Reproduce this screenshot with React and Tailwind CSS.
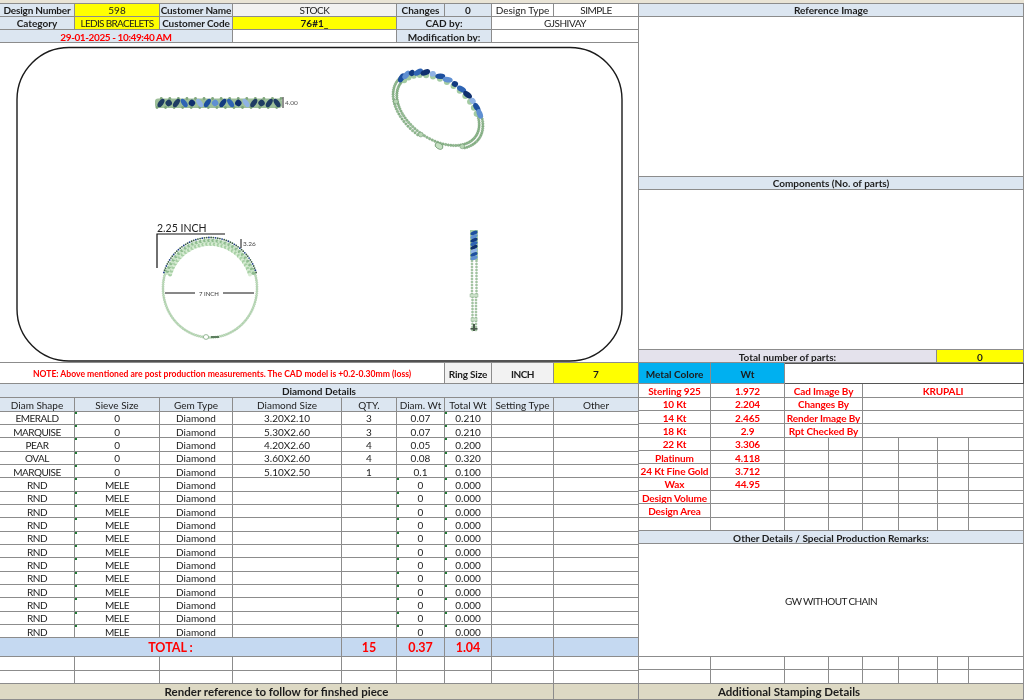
import React from "react";

const BLUE = "bg-[#dce6f1]";
const YELLOW = "bg-[#ffff00]";
const GREY = "bg-[#f2f2f2]";
const TOTAL = "bg-[#c5d9f1]";
const BEIGE = "bg-[#ddd9c4]";
const CAPS = "tracking-[-0.5px]";

const Cell = ({ children, className = "", mark = false }) => (
    <div className={`relative flex items-center justify-center overflow-hidden whitespace-nowrap border-r border-b border-[#8c8c8c] pt-[1px] leading-none ${className}`}>
        {mark && <span className="absolute left-0 top-0 h-[2px] w-[2px] bg-[#1f7a35]"></span>}
        {children}
    </div>
);

const stones = [
    ["EMERALD", "0", "3.20X2.10", "3", "0.07", "0.210"],
    ["MARQUISE", "0", "5.30X2.60", "3", "0.07", "0.210"],
    ["PEAR", "0", "4.20X2.60", "4", "0.05", "0.200"],
    ["OVAL", "0", "3.60X2.60", "4", "0.08", "0.320"],
    ["MARQUISE", "0", "5.10X2.50", "1", "0.1", "0.100"],
];
const meleRows = Array.from({ length: 12 }, () => ["RND", "MELE", "", "", "0", "0.000"]);
const diamondRows = [...stones, ...meleRows];

const metals = [
    ["Sterling 925", "1.972", "Cad Image By", "KRUPALI"],
    ["10 Kt", "2.204", "Changes By", ""],
    ["14 Kt", "2.465", "Render Image By", ""],
    ["18 Kt", "2.9", "Rpt Checked By", ""],
    ["22 Kt", "3.306"],
    ["Platinum", "4.118"],
    ["24 Kt Fine Gold", "3.712"],
    ["Wax", "44.95"],
    ["Design Volume", ""],
    ["Design Area", ""],
    ["", ""],
];

const GEM_COLORS = ["#1d4f9e", "#5f8fd2", "#123a80", "#2f64b4", "#0f2f6e", "#8fb2e4"];

// point on a tilted ellipse, angle in degrees
const onEllipse = (cx, cy, rx, ry, tilt, deg) => {
    const t = (deg * Math.PI) / 180;
    const a = (tilt * Math.PI) / 180;
    const x = rx * Math.cos(t);
    const y = ry * Math.sin(t);
    return [cx + x * Math.cos(a) - y * Math.sin(a), cy + x * Math.sin(a) + y * Math.cos(a)];
};

const range = (from, to, n) => Array.from({ length: n }, (_, i) => from + ((to - from) * i) / (n - 1));

const StraightView = () => {
    const xs = range(161, 277, 16);
    return (
        <g>
            <rect x="155" y="98.5" width="127" height="9.5" rx="3" fill="#9dbf99" />
            {range(157, 281, 30).map((x, i) => (
                <circle key={i} cx={x} cy={i % 2 ? 98.5 : 107.5} r="1.4" fill="#7fa67c" />
            ))}
            {xs.map((x, i) => (
                <ellipse
                    key={i}
                    cx={x}
                    cy="103"
                    rx={i % 3 === 1 ? 3.2 : 4.8}
                    ry={i % 3 === 1 ? 3.2 : 2.5}
                    transform={`rotate(${i % 2 ? 55 : -55} ${x} 103)`}
                    fill={i < 3 || i > 11 ? "#1f3c63" : GEM_COLORS[i % GEM_COLORS.length]}
                />
            ))}
            <line x1="283" y1="97" x2="283" y2="108" stroke="#222" strokeWidth="1" />
            <text x="285" y="105" fontSize="6.5" fill="#555">4.00</text>
        </g>
    );
};

const TiltedView = () => {
    const connectors = [392, 450, 505];
    return (
        <g>
            {range(322, 550, 62).map((deg, i) => {
                const [x, y] = onEllipse(438, 110, 50, 32, 35, deg);
                const [x2, y2] = onEllipse(438, 110, 46, 29, 35, deg);
                const single = deg > 392 && deg < 450;
                return (
                    <g key={i} fill="#93bd92" stroke="#648f66" strokeWidth="0.4">
                        <circle cx={x2} cy={y2} r="1.2" />
                        {!single && <circle cx={x} cy={y} r="1.2" />}
                    </g>
                );
            })}
            {connectors.map((deg) => {
                const [x, y] = onEllipse(438, 110, 48, 30, 35, deg);
                return <circle key={deg} cx={x} cy={y} r="2.4" fill="#b7d6b4" stroke="#648f66" strokeWidth="0.5" />;
            })}
            <ellipse cx="439" cy="146" rx="4.2" ry="2.8" transform="rotate(30 439 146)" fill="#c5e0c2" stroke="#648f66" strokeWidth="0.7" />
            {range(190, 318, 14).map((deg, i) => {
                const [x, y] = onEllipse(438, 110, 49, 31, 35, deg);
                const [bx, by] = onEllipse(438, 110, 45.5, 28.5, 35, deg);
                return (
                    <g key={i}>
                        <circle cx={bx} cy={by} r="3" fill="#a3cba2" />
                        <ellipse
                            cx={x}
                            cy={y}
                            rx={i % 3 === 2 ? 3.2 : 5}
                            ry="2.8"
                            transform={`rotate(${deg - 250} ${x} ${y})`}
                            fill={GEM_COLORS[i % GEM_COLORS.length]}
                        />
                    </g>
                );
            })}
        </g>
    );
};

const TopView = () => (
    <g>
        {range(-22, 202, 88).map((deg, i) => {
            const [x, y] = onEllipse(210, 288, 47, 49.5, 0, deg);
            return <circle key={i} cx={x} cy={y} r="1.05" fill="#c6e3c2" stroke="#86b087" strokeWidth="0.4" />;
        })}
        {range(198, 342, 56).map((deg, i) => {
            const [x, y] = onEllipse(210, 288, 42, 44, 0, deg);
            const [mx, my] = onEllipse(210, 288, 45.5, 47.5, 0, deg);
            const [ox, oy] = onEllipse(210, 288, 48.5, 50.5, 0, deg);
            return (
                <g key={i}>
                    <circle cx={x} cy={y} r="2" fill={i % 2 ? "#d7ecd3" : "#a6cfa4"} />
                    <circle cx={mx} cy={my} r="1.8" fill={i % 2 ? "#8fbc8f" : "#c9e4c6"} />
                    <circle cx={ox} cy={oy} r="0.9" fill={i % 3 === 0 ? "#1d3f86" : "#3a5f45"} />
                </g>
            );
        })}
        <ellipse cx="206" cy="337" rx="2.6" ry="2.4" fill="#fff" stroke="#7fa880" strokeWidth="0.8" />
        <rect x="211" y="336" width="8" height="2" fill="#5d7f5f" />
        <polyline points="157,268 157,234 225,234" fill="none" stroke="#111" strokeWidth="1.2" />
        <text x="157" y="232" fontSize="10.5" fill="#222">2.25 INCH</text>
        <line x1="241" y1="239" x2="241" y2="248" stroke="#111" strokeWidth="1" />
        <text x="243" y="246" fontSize="6.5" fill="#444">3.26</text>
        <line x1="165" y1="293" x2="195" y2="293" stroke="#111" strokeWidth="1" />
        <text x="209" y="295.5" fontSize="6" fill="#333" textAnchor="middle">7 INCH</text>
        <line x1="223" y1="293" x2="254" y2="293" stroke="#111" strokeWidth="1" />
    </g>
);

const SideView = () => (
    <g>
        <rect x="470" y="230" width="8" height="30" fill="#a9cfa8" />
        {range(233, 258, 8).map((y, i) => (
            <ellipse
                key={i}
                cx="474"
                cy={y}
                rx="3.8"
                ry="1.8"
                transform={`rotate(-25 474 ${y})`}
                fill={GEM_COLORS[i % GEM_COLORS.length]}
            />
        ))}
        {range(261, 330, 24).map((y, i) => (
            <g key={i} fill="#a5c9a3" stroke="#6f9a70" strokeWidth="0.3">
                <circle cx={y < 296 ? 472 : 472.5} cy={y} r="1.1" />
                <circle cx={y < 296 ? 476.5 : 476} cy={y} r="1.1" />
            </g>
        ))}
        <rect x="470" y="294" width="8" height="3" fill="#cfe3cc" stroke="#7fa880" strokeWidth="0.4" />
        <rect x="471" y="318" width="6" height="3" fill="#cfe3cc" stroke="#7fa880" strokeWidth="0.4" />
        <rect x="473" y="324" width="2" height="7" fill="#4a5a4c" />
        <rect x="470.5" y="328" width="7" height="1.6" fill="#4a5a4c" />
    </g>
);

const CadDrawing = () => (
    <svg className="block h-[320px] w-[638px]" viewBox="0 43 638 320" style={{ fontFamily: "Lato, sans-serif" }}>
        <rect x="17" y="47.5" width="605" height="313.5" rx="52" fill="#fff" stroke="#1a1a1a" strokeWidth="1.4" />
        <StraightView />
        <TiltedView />
        <TopView />
        <SideView />
    </svg>
);

const LeftPanel = () => (
    <div className="w-[639px] shrink-0">
        <div className="grid grid-cols-[75px_85px_73px_109px_55px_48px_47px_62px_85px] auto-rows-[13.33px]">
            <Cell className={`${BLUE} font-bold tracking-[-0.2px]`}>Design Number</Cell>
            <Cell className={YELLOW}>598</Cell>
            <Cell className={`${BLUE} font-bold tracking-[-0.1px]`}>Customer Name</Cell>
            <Cell className={`${GREY} col-span-2 ${CAPS}`}>STOCK</Cell>
            <Cell className={`${BLUE} font-bold`}>Changes</Cell>
            <Cell className={`${BLUE} font-bold`}>0</Cell>
            <Cell>Design Type</Cell>
            <Cell className={CAPS}>SIMPLE</Cell>

            <Cell className={`${BLUE} font-bold`}>Category</Cell>
            <Cell className={`${YELLOW} tracking-[-0.7px]`}>LEDIS BRACELETS</Cell>
            <Cell className={`${BLUE} font-bold tracking-[-0.1px]`}>Customer Code</Cell>
            <Cell className={`${YELLOW} col-span-2 font-bold`}>76#1_</Cell>
            <Cell className={`${BLUE} col-span-2 font-bold`}>CAD by:</Cell>
            <Cell className={`col-span-2 ${CAPS}`}>GJSHIVAY</Cell>

            <Cell className={`${BLUE} col-span-3 font-bold tracking-[-0.4px] text-[#ff0000]`}>29-01-2025 - 10:49:40 AM</Cell>
            <Cell className="col-span-2"></Cell>
            <Cell className={`${BLUE} col-span-2 font-bold`}>Modification by:</Cell>
            <Cell className="col-span-2"></Cell>
        </div>

        <div className="h-[320px] border-r border-b border-[#8c8c8c]">
            <CadDrawing />
        </div>

        <div className="grid h-[21px] grid-cols-[445px_47px_62px_85px]">
            <Cell className="text-[8.6px] font-bold text-[#ff0000]">
                NOTE: Above mentioned are post production measurements. The CAD model is +0.2-0.30mm (loss)
            </Cell>
            <Cell className={`${GREY} font-bold tracking-[-0.2px]`}>Ring Size</Cell>
            <Cell className={`${GREY} font-bold ${CAPS}`}>INCH</Cell>
            <Cell className={`${YELLOW} font-bold`}>7</Cell>
        </div>

        <div className="grid grid-cols-[75px_85px_73px_109px_55px_48px_47px_62px_85px] grid-rows-[13.33px_14px] auto-rows-[13.33px]">
            <Cell className={`${BLUE} col-span-9 font-bold`}>Diamond Details</Cell>
            {["Diam Shape", "Sieve Size", "Gem Type", "Diamond Size", "QTY.", "Diam. Wt", "Total Wt", "Setting Type", "Other"].map((title) => (
                <Cell key={title} className={BLUE}>{title}</Cell>
            ))}
            {diamondRows.map((row, index) => (
                <React.Fragment key={index}>
                    <Cell className={CAPS}>{row[0]}</Cell>
                    <Cell className={CAPS} mark>{row[1]}</Cell>
                    <Cell>Diamond</Cell>
                    <Cell>{row[2]}</Cell>
                    <Cell>{row[3]}</Cell>
                    <Cell mark={row[1] === "MELE"}>{row[4]}</Cell>
                    <Cell mark>{row[5]}</Cell>
                    <Cell></Cell>
                    <Cell></Cell>
                </React.Fragment>
            ))}
        </div>

        <div className="grid h-[19px] grid-cols-[342px_55px_48px_47px_62px_85px] text-[12.5px] font-bold text-[#ff0000]">
            <Cell className={TOTAL}>TOTAL :</Cell>
            <Cell className={TOTAL}>15</Cell>
            <Cell className={TOTAL}>0.37</Cell>
            <Cell className={TOTAL}>1.04</Cell>
            <Cell className={TOTAL}></Cell>
            <Cell className={TOTAL}></Cell>
        </div>

        <div className="grid grid-cols-[75px_85px_73px_109px_55px_48px_47px_62px_85px] auto-rows-[13.33px]">
            {Array.from({ length: 18 }, (_, i) => (
                <Cell key={i}></Cell>
            ))}
        </div>

        <div className="grid h-[16px] grid-cols-[554px_85px] text-[11.5px] font-bold">
            <Cell className={BEIGE}>Render reference to follow for finshed piece</Cell>
            <Cell className={BEIGE}></Cell>
        </div>
    </div>
);

const RightPanel = () => (
    <div className="flex-1">
        <Cell className={`${BLUE} h-[13.33px] font-bold`}>Reference Image</Cell>
        <Cell className="h-[160px]"></Cell>
        <Cell className={`${BLUE} h-[13.33px] font-bold`}>Components (No. of parts)</Cell>
        <Cell className="h-[160px]"></Cell>
        <div className="grid h-[13.34px] grid-cols-[298px_87px] font-bold">
            <Cell className="bg-[#e4e2ec]">Total number of parts:</Cell>
            <Cell className={YELLOW}>0</Cell>
        </div>
        <div className="grid h-[21px] grid-cols-[72px_74px_239px] font-bold">
            <Cell className="bg-[#00b0f0]">Metal Colore</Cell>
            <Cell className="bg-[#00b0f0]">Wt</Cell>
            <div className="border-t border-r border-b border-[#555]"></div>
        </div>
        <div className="grid grid-cols-[72px_74px_44px_34px_36px_39px_31px_55px] auto-rows-[13.33px] font-bold tracking-[-0.1px] text-[#ff0000]">
            {metals.map((row, index) => (
                <React.Fragment key={index}>
                    <Cell>{row[0]}</Cell>
                    <Cell>{row[1]}</Cell>
                    {row.length > 2 ? (
                        <>
                            <Cell className="col-span-2">{row[2]}</Cell>
                            <Cell className="col-span-4">{row[3]}</Cell>
                        </>
                    ) : (
                        <>
                            <Cell></Cell>
                            <Cell></Cell>
                            <Cell></Cell>
                            <Cell></Cell>
                            <Cell></Cell>
                            <Cell></Cell>
                        </>
                    )}
                </React.Fragment>
            ))}
        </div>
        <Cell className={`${BLUE} h-[13.33px] font-bold`}>Other Details / Special Production Remarks:</Cell>
        <Cell className="h-[112.67px] tracking-[-0.6px]">GW WITHOUT CHAIN</Cell>
        <div className="grid grid-cols-[72px_74px_44px_34px_36px_39px_31px_55px] auto-rows-[13.33px]">
            {Array.from({ length: 16 }, (_, i) => (
                <Cell key={i}></Cell>
            ))}
        </div>
        <Cell className={`${BEIGE} h-[16px] pr-[84px] text-[11.5px] font-bold`}>Additional Stamping Details</Cell>
    </div>
);

const App = () => {
    return (
        <div className="h-[700px] w-[1024px] overflow-hidden bg-white font-['Lato',sans-serif] text-[10px] text-[#1c1c1c] blur-[0.35px]">
            <div className="h-[3.5px] border-b border-[#8c8c8c] bg-[#e9e4d6]"></div>
            <div className="flex">
                <LeftPanel />
                <RightPanel />
            </div>
        </div>
    );
};

export default App;
